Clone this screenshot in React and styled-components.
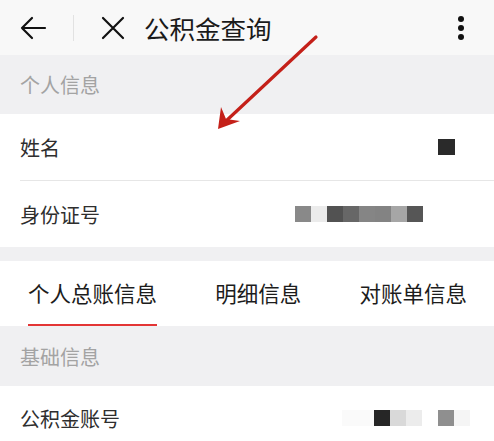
import React from "react";
import styled, { createGlobalStyle } from "styled-components";

const Global = createGlobalStyle`
  html, body { margin: 0; padding: 0; background: #ffffff; }
  body { font-family: "Noto Sans CJK SC", "Noto Sans", sans-serif; }
  * { box-sizing: border-box; }
`;

const Page = styled.div`
  position: relative;
  width: 494px;
  height: 441px;
  overflow: hidden;
  background: #ffffff;
`;

const Header = styled.header`
  height: 55px;
  background: #f8f8f8;
  display: flex;
  align-items: center;
  padding: 0 0 0 18px;
`;

const IconBtn = styled.div`
  display: flex;
  align-items: center;
  justify-content: center;
  width: ${(p) => p.$w || 30}px;
  height: 30px;
`;

const VDivider = styled.div`
  width: 1px;
  height: 26px;
  background: #e2e2e2;
  margin: 0 26px 0 25px;
`;

const Title = styled.h1`
  margin: 0 0 0 18px;
  font-size: 25.5px;
  font-weight: 400;
  color: #1a1a1a;
  flex: 1;
  line-height: 1;
`;

const More = styled.div`
  width: 10px;
  display: flex;
  flex-direction: column;
  align-items: center;
  gap: 3px;
  margin-right: 28px;
  & > span {
    width: 6px;
    height: 6px;
    border-radius: 50%;
    background: #111;
  }
`;

const SectionTitle = styled.div`
  height: ${(p) => p.$h}px;
  background: #f0f0f2;
  display: flex;
  align-items: center;
  padding-left: 20px;
  font-size: 20px;
  color: #a3a3a3;
`;

const Row = styled.div`
  height: ${(p) => p.$h || 66}px;
  display: flex;
  align-items: center;
  justify-content: space-between;
  padding-left: 20px;
  background: #fff;
`;

const RowInner = styled.div`
  flex: 1;
  height: 100%;
  display: flex;
  align-items: center;
  justify-content: space-between;
  border-bottom: ${(p) => (p.$line ? "1px solid #e6e6e6" : "none")};
  padding-right: ${(p) => p.$pr || 0}px;
`;

const Label = styled.span`
  font-size: 20px;
  color: #2e2e2e;
`;

const Pixels = styled.div`
  display: flex;
  height: 16px;
`;

const Px = styled.span`
  width: ${(p) => p.$w || 16}px;
  height: 16px;
  background: ${(p) => p.$c};
`;

const Gap = styled.div`
  height: ${(p) => p.$h}px;
  background: #f0f0f2;
`;

const Tabs = styled.nav`
  height: 65px;
  display: flex;
  justify-content: space-between;
  padding: 0 27px 0 28px;
  background: #fff;
`;

const Tab = styled.div`
  position: relative;
  display: flex;
  align-items: center;
  font-size: 21.5px;
  color: #1c1c1c;
  padding-bottom: 2px;
  &::after {
    content: "";
    display: ${(p) => (p.$active ? "block" : "none")};
    position: absolute;
    left: 0;
    right: 0;
    bottom: 0;
    height: 2px;
    background: #e33535;
  }
`;

const Arrow = styled.svg`
  position: absolute;
  left: 0;
  top: 0;
  pointer-events: none;
`;

export default function App() {
  return (
    <Page>
      <Global />
      <Header>
        <IconBtn $w={30}>
          <svg width="28" height="24" viewBox="0 0 28 24">
            <path d="M3 12 H26 M13 2 L3 12 L13 22" fill="none" stroke="#111" strokeWidth="2.2" strokeLinecap="round" strokeLinejoin="round" />
          </svg>
        </IconBtn>
        <VDivider />
        <IconBtn $w={26}>
          <svg width="24" height="24" viewBox="0 0 24 24">
            <path d="M2 2 L22 22 M22 2 L2 22" fill="none" stroke="#111" strokeWidth="2.2" strokeLinecap="round" />
          </svg>
        </IconBtn>
        <Title>公积金查询</Title>
        <More>
          <span />
          <span />
          <span />
        </More>
      </Header>

      <SectionTitle $h={59}>个人信息</SectionTitle>

      <Row $h={67}>
        <RowInner $line $pr={39}>
          <Label>姓名</Label>
          <Pixels>
            <Px $c="#2a2a2a" $w={17} />
          </Pixels>
        </RowInner>
      </Row>
      <Row $h={66}>
        <RowInner $pr={71}>
          <Label>身份证号</Label>
          <Pixels>
            <Px $c="#898989" />
            <Px $c="#ebebeb" />
            <Px $c="#525252" />
            <Px $c="#676767" />
            <Px $c="#858585" />
            <Px $c="#838383" />
            <Px $c="#a6a6a6" />
            <Px $c="#565656" />
          </Pixels>
        </RowInner>
      </Row>

      <Gap $h={14} />

      <Tabs>
        <Tab $active>个人总账信息</Tab>
        <Tab>明细信息</Tab>
        <Tab>对账单信息</Tab>
      </Tabs>

      <SectionTitle $h={60}>基础信息</SectionTitle>

      <Row $h={64}>
        <RowInner $pr={24}>
          <Label>公积金账号</Label>
          <Pixels>
            <Px $c="#fafafa" />
            <Px $c="#fafafa" />
            <Px $c="#262626" />
            <Px $c="#d9d9d9" />
            <Px $c="#ececec" />
            <Px $c="#ffffff" />
            <Px $c="#8f8f8f" />
            <Px $c="#f5f5f5" />
          </Pixels>
        </RowInner>
      </Row>

      <Arrow width="494" height="441" viewBox="0 0 494 441">
        <line x1="316" y1="37" x2="226" y2="121" stroke="#c42019" strokeWidth="3.2" strokeLinecap="round" />
        <path d="M218 129 L221 107 L226 119 L240 121 Z" fill="#c42019" />
      </Arrow>
    </Page>
  );
}
